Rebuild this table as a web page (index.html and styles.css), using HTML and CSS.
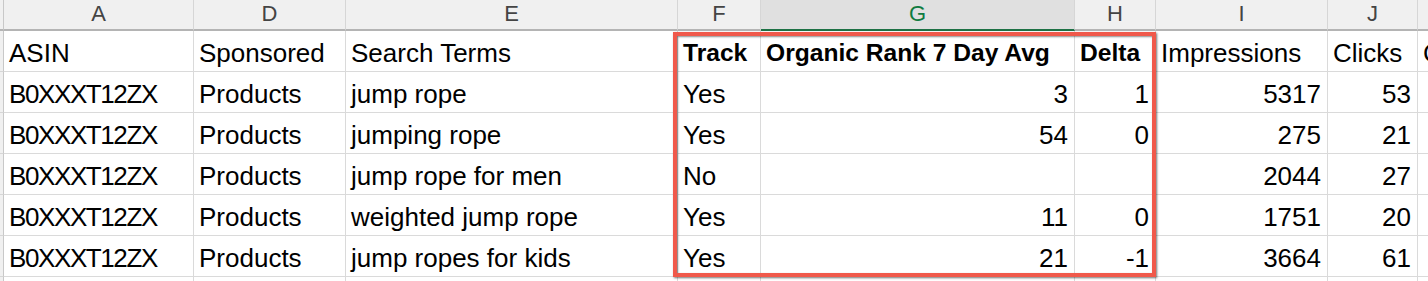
FILE: index.html
```html
<!DOCTYPE html>
<html>
<head>
<meta charset="utf-8">
<link rel="stylesheet" href="styles.css">
</head>
<body>
<div class="sheet">
  <div class="grid">
    <div class="ch corner"></div>
    <div class="ch">A</div>
    <div class="ch">D</div>
    <div class="ch">E</div>
    <div class="ch">F</div>
    <div class="ch sel">G</div>
    <div class="ch">H</div>
    <div class="ch">I</div>
    <div class="ch">J</div>
    <div class="ch"></div>

    <div class="rh"></div>
    <div class="c">ASIN</div>
    <div class="c">Sponsored</div>
    <div class="c">Search Terms</div>
    <div class="c b">Track</div>
    <div class="c b">Organic Rank 7 Day Avg</div>
    <div class="c b">Delta</div>
    <div class="c">Impressions</div>
    <div class="c">Clicks</div>
    <div class="c">C</div>

    <div class="rh"></div>
    <div class="c id">B0XXXT12ZX</div>
    <div class="c">Products</div>
    <div class="c">jump rope</div>
    <div class="c">Yes</div>
    <div class="c n">3</div>
    <div class="c n">1</div>
    <div class="c n">5317</div>
    <div class="c n">53</div>
    <div class="c"></div>

    <div class="rh"></div>
    <div class="c id">B0XXXT12ZX</div>
    <div class="c">Products</div>
    <div class="c">jumping rope</div>
    <div class="c">Yes</div>
    <div class="c n">54</div>
    <div class="c n">0</div>
    <div class="c n">275</div>
    <div class="c n">21</div>
    <div class="c"></div>

    <div class="rh"></div>
    <div class="c id">B0XXXT12ZX</div>
    <div class="c">Products</div>
    <div class="c">jump rope for men</div>
    <div class="c">No</div>
    <div class="c n"></div>
    <div class="c n"></div>
    <div class="c n">2044</div>
    <div class="c n">27</div>
    <div class="c"></div>

    <div class="rh"></div>
    <div class="c id">B0XXXT12ZX</div>
    <div class="c">Products</div>
    <div class="c">weighted jump rope</div>
    <div class="c">Yes</div>
    <div class="c n">11</div>
    <div class="c n">0</div>
    <div class="c n">1751</div>
    <div class="c n">20</div>
    <div class="c"></div>

    <div class="rh"></div>
    <div class="c id">B0XXXT12ZX</div>
    <div class="c">Products</div>
    <div class="c">jump ropes for kids</div>
    <div class="c">Yes</div>
    <div class="c n">21</div>
    <div class="c n">-1</div>
    <div class="c n">3664</div>
    <div class="c n">61</div>
    <div class="c"></div>

    <div class="rh"></div>
    <div class="c"></div>
    <div class="c"></div>
    <div class="c"></div>
    <div class="c"></div>
    <div class="c"></div>
    <div class="c"></div>
    <div class="c"></div>
    <div class="c"></div>
    <div class="c"></div>
  </div>
  <div class="highlight"></div>
</div>
</body>
</html>
```

FILE: styles.css
```css
html, body {
  margin: 0;
  padding: 0;
  background: #ffffff;
  overflow: hidden;
}

.sheet {
  position: relative;
  width: 1428px;
  height: 281px;
  overflow: hidden;
}

.grid {
  display: grid;
  grid-template-columns: 4px 190px 152px 332px 83px 314px 81px 172px 90px 60px;
  grid-template-rows: 31px 41px 41px 41px 41px 41px 41px 41px;
  font-family: "Liberation Sans", Arial, sans-serif;
  color: #000;
}

.ch {
  box-sizing: border-box;
  background: #f0f0f0;
  border-right: 1px solid #d6d6d6;
  border-bottom: 2px solid #b4b4b4;
  font-size: 22px;
  color: #444444;
  display: flex;
  align-items: center;
  justify-content: center;
  line-height: 1;
  padding-bottom: 2px;
}

.ch.corner {
  border-right: 1px solid #c8c8c8;
}

.ch.sel {
  background: #e0e0e0;
  color: #107c41;
  border-bottom: 2px solid #1e7145;
}

.rh {
  box-sizing: border-box;
  background: #f0f0f0;
  border-right: 1px solid #c8c8c8;
  border-bottom: 1px solid #d6d6d6;
}

.c {
  box-sizing: border-box;
  border-right: 1px solid #dadada;
  border-bottom: 1px solid #dadada;
  font-size: 26px;
  line-height: 26px;
  display: flex;
  align-items: flex-end;
  padding: 0 5px 5px 5px;
  white-space: nowrap;
  overflow: hidden;
}

.c.id {
  letter-spacing: -1.4px;
}

.c.b {
  font-weight: bold;
  font-size: 24.6px;
}

.c.n {
  justify-content: flex-end;
  padding-right: 6px;
}

.highlight {
  position: absolute;
  left: 673px;
  top: 32px;
  width: 483px;
  height: 245px;
  box-sizing: border-box;
  border: 4px solid #f0594b;
  box-shadow: 1px 1px 2px rgba(0, 0, 0, 0.55), inset 1px 1px 2px rgba(0, 0, 0, 0.45);
}
```
